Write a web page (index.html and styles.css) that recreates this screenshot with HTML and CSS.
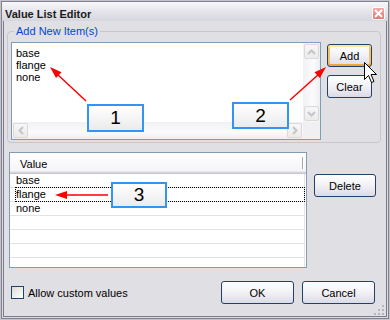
FILE: index.html
```html
<!DOCTYPE html>
<html lang="en">
<head>
    <meta charset="UTF-8">
    <meta name="viewport" content="width=device-width, initial-scale=1.0">
    <title>Value List Editor</title>
    <link rel="stylesheet" href="styles.css">
</head>
<body>
<div class="screen">
    <div class="window">
        <div class="titlebar">
            <span class="title">Value List Editor</span>
            <span class="close">
                <svg width="9" height="9" viewBox="0 0 9 9"><path d="M1 1L8 8M8 1L1 8" stroke="#fff" stroke-width="2"/></svg>
            </span>
        </div>
        <div class="body">
            <fieldset class="group">
                <legend>Add New Item(s)</legend>
                <div class="group-row">
                    <div class="textbox">
                        <div class="text-area">base<br>flange<br>none</div>
                        <div class="vscroll">
                            <span class="sb-btn"><svg width="9" height="6" viewBox="0 0 9 6"><path d="M1 5L4.5 1.5L8 5" fill="none" stroke="#c4c4cb" stroke-width="2"/></svg></span>
                            <span class="sb-btn"><svg width="9" height="6" viewBox="0 0 9 6"><path d="M1 1L4.5 4.5L8 1" fill="none" stroke="#c4c4cb" stroke-width="2"/></svg></span>
                        </div>
                        <div class="hscroll">
                            <span class="sb-btn"><svg width="6" height="9" viewBox="0 0 6 9"><path d="M5 1L1.5 4.5L5 8" fill="none" stroke="#c4c4cb" stroke-width="2"/></svg></span>
                            <span class="sb-btn"><svg width="6" height="9" viewBox="0 0 6 9"><path d="M1 1L4.5 4.5L1 8" fill="none" stroke="#c4c4cb" stroke-width="2"/></svg></span>
                        </div>
                        <div class="sb-corner"></div>
                    </div>
                    <div class="side-buttons">
                        <button type="button" class="btn hot">Add</button>
                        <button type="button" class="btn">Clear</button>
                    </div>
                </div>
            </fieldset>

            <div class="list-section">
                <div class="listview">
                    <div class="list-header">
                        <span class="col-name">Value</span>
                        <span class="col-sep"></span>
                    </div>
                    <div class="row"><span class="cell">base</span></div>
                    <div class="row"><span class="cell focused">flange</span></div>
                    <div class="row"><span class="cell">none</span></div>
                    <div class="row"></div>
                    <div class="row"></div>
                    <div class="row"></div>
                    <div class="row"></div>
                </div>
                <button type="button" class="btn delete">Delete</button>
            </div>

            <div class="footer">
                <label class="check-label"><span class="check"></span>Allow custom values</label>
                <div class="dialog-buttons">
                    <button type="button" class="btn wide">OK</button>
                    <button type="button" class="btn wide">Cancel</button>
                </div>
            </div>
        </div>
    </div>

    <!-- annotations drawn over the dialog -->
    <div class="callout callout-1">1</div>
    <div class="callout callout-2">2</div>
    <div class="callout callout-3">3</div>

    <svg class="overlay" width="390" height="320" viewBox="0 0 390 320">
        <g stroke="#f00" stroke-width="1.5">
            <line x1="86" y1="101" x2="57" y2="74"/>
            <line x1="290" y1="100" x2="319" y2="74"/>
            <line x1="108" y1="195" x2="66" y2="195"/>
        </g>
        <g fill="#f00">
            <polygon points="50,67 61.5,72.3 56,78.1"/>
            <polygon points="326,67 319.9,78.1 314.5,72.2"/>
            <polygon points="55,195 67,191 67,199"/>
        </g>
        <g fill="#b5b5bf">
            <rect x="382" y="305" width="2" height="2"/>
            <rect x="378" y="309" width="2" height="2"/>
            <rect x="382" y="309" width="2" height="2"/>
            <rect x="374" y="313" width="2" height="2"/>
            <rect x="378" y="313" width="2" height="2"/>
            <rect x="382" y="313" width="2" height="2"/>
        </g>
        <path d="M364.5 62.5V79.5L368.5 75.5L371.5 82.5L374 81.5L371 74.5H376.5Z" fill="#fff" stroke="#000" stroke-width="1"/>
    </svg>
</div>
</body>
</html>
```

FILE: styles.css
```css
* {
    box-sizing: border-box;
}

body {
    margin: 0;
    font-family: "Liberation Sans", Arial, sans-serif;
    font-size: 11px;
    color: #000;
    background-color: #e0dfe3;
}

.screen {
    position: relative;
    width: 390px;
    height: 320px;
}

.window {
    width: 390px;
    height: 320px;
    display: flex;
    flex-direction: column;
    border: 1px solid #c4c4cc;
    background-color: #dcdce2;
    box-shadow: inset 0 0 0 1px #80808f;
}

.titlebar {
    flex: none;
    height: 19px;
    margin: 1px 1px 0;
    padding: 0 3px;
    display: flex;
    justify-content: space-between;
    align-items: flex-start;
    background: linear-gradient(#f8f8fa, #e6e6ec 45%, #d6d6de);
}

.title {
    margin-top: 6px;
    line-height: 13px;
    font-weight: bold;
    color: #1a1a1a;
}

.close {
    width: 13px;
    height: 13px;
    margin-top: 5px;
    display: flex;
    align-items: center;
    justify-content: center;
    border: 1px solid #fff;
    border-radius: 2px;
    background: linear-gradient(#f2aaa6, #e07773);
}

.body {
    flex: 1;
    margin: 0 2px 2px;
    border: 1px solid #7b7b8b;
    border-top: 0;
    background-color: #e0dfe3;
}

/* group box */
.group {
    width: 374px;
    height: 118px;
    margin: 4px 0 0 3px;
    padding: 0;
    border: 1px solid #c6c6cc;
    border-radius: 4px;
}

.group legend {
    margin-left: 6px;
    padding: 0 2px;
    line-height: 13px;
    color: #0046d5;
}

.group-row {
    display: flex;
    margin: 4px 0 0 3px;
}

.textbox {
    width: 310px;
    height: 98px;
    display: grid;
    grid-template-columns: 1fr 17px;
    grid-template-rows: 1fr 17px;
    border: 1px solid #7f9db9;
    background-color: #fff;
}

.text-area {
    padding: 4px 0 0 4px;
    line-height: 12px;
}

.vscroll,
.hscroll {
    display: flex;
    justify-content: space-between;
    padding: 1px;
}

.vscroll {
    flex-direction: column;
    background: linear-gradient(to right, #f1f1f4, #fbfbfc 60%, #eeeef2);
}

.hscroll {
    background: linear-gradient(#f1f1f4, #fbfbfc 60%, #eeeef2);
}

.sb-btn {
    width: 15px;
    height: 15px;
    display: flex;
    align-items: center;
    justify-content: center;
    border: 1px solid #d9d9de;
    border-radius: 2px;
    background: linear-gradient(#f7f7f8, #ecebe8);
}

.sb-corner {
    background-color: #f0f0f3;
}

.side-buttons {
    display: flex;
    flex-direction: column;
    gap: 8px;
    margin: 2px 0 0 6px;
}

/* buttons */
.btn {
    width: 45px;
    height: 23px;
    padding: 0;
    font-family: inherit;
    font-size: 11px;
    color: #000;
    border: 1px solid #21406a;
    border-radius: 3px;
    background: linear-gradient(#ffffff, #f3f3f6 45%, #dcdbe6);
}

.btn.hot {
    box-shadow: inset 0 2px #fde6a4, inset 0 -2px #eea53a, inset 2px 0 #f7c060, inset -2px 0 #f7c060;
}

.btn.wide {
    width: 73px;
}

/* list view */
.list-section {
    display: flex;
    align-items: flex-start;
    margin: 9px 0 0 5px;
}

.listview {
    width: 298px;
    height: 116px;
    overflow: hidden;
    border: 1px solid #7f9db9;
    background-color: #fff;
}

.list-header {
    height: 21px;
    display: flex;
    padding: 5px 0 0 10px;
    line-height: 13px;
    border-bottom: 1px solid #c5c5cd;
    background: linear-gradient(#ffffff, #f4f4f7);
    box-shadow: inset 0 -1px #d6d6de, inset 0 -2px #e6e6ec;
}

.col-name {
    flex: 1;
}

.col-sep {
    width: 1px;
    height: 12px;
    margin: -1px 3px 0 0;
    background-color: #a7a7b0;
    box-shadow: 1px 0 #fff;
}

.row {
    width: 295px;
    height: 14px;
    border-bottom: 1px solid #e3e3e3;
    border-right: 1px solid #e3e3e3;
}

.cell {
    display: block;
    margin-left: 6px;
    line-height: 13px;
}

.cell.focused {
    outline: 1px dotted #000;
}

.delete {
    width: 62px;
    margin: 22px 0 0 7px;
}

/* footer */
.footer {
    display: flex;
    align-items: center;
    margin: 13px 11px 0 7px;
}

.check-label {
    display: flex;
    align-items: center;
}

.check {
    width: 13px;
    height: 13px;
    margin-right: 4px;
    border: 1px solid #1c4470;
    background: linear-gradient(135deg, #dcdcd6, #ffffff);
}

.dialog-buttons {
    display: flex;
    gap: 8px;
    margin-left: auto;
}

/* annotations */
.callout {
    position: absolute;
    display: flex;
    align-items: center;
    justify-content: center;
    font-size: 19px;
    border: 2px solid #3394f4;
    background: linear-gradient(#ffffff, #ebebeb);
}

.callout-1 {
    left: 87px;
    top: 104px;
    width: 57px;
    height: 28px;
}

.callout-2 {
    left: 232px;
    top: 102px;
    width: 57px;
    height: 27px;
}

.callout-3 {
    left: 111px;
    top: 182px;
    width: 56px;
    height: 26px;
}

.overlay {
    position: absolute;
    left: 0;
    top: 0;
}
```
